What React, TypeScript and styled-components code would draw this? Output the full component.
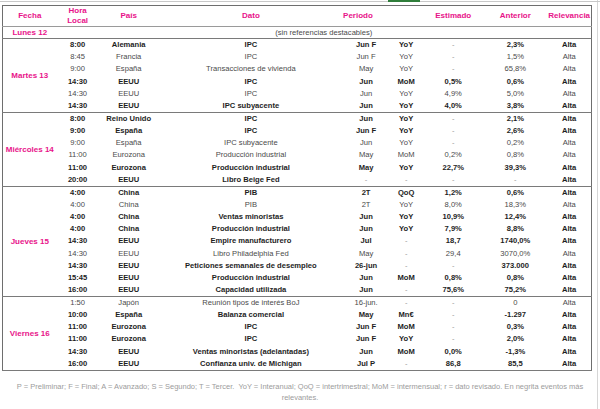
import React from "react";
import styled, { createGlobalStyle } from "styled-components";

const Global = createGlobalStyle`
  html, body { margin: 0; padding: 0; background: #fff; }
  body { font-family: "Liberation Sans", Arial, sans-serif; }
`;

const PINK = "#e8138a";

const Page = styled.div`
  width: 598px;
  height: 409px;
  border-right: 1px solid #d6d6d6;
  box-sizing: border-box;
  position: relative;
  padding: 5px 0 0 2px;
`;

const TopLine = styled.div`
  position: absolute;
  left: 0;
  top: 1px;
  width: 600px;
  height: 1px;
  background: #c8c8c8;
`;

const GreenTab = styled.div`
  position: absolute;
  left: 388px;
  top: 0;
  width: 32px;
  height: 2px;
  background: #2f7d3a;
`;

const Table = styled.table`
  border-collapse: collapse;
  table-layout: fixed;
  width: 590px;
  border: 1px solid #6e6e6e;
  font-size: 7.6px;
  color: #4a4a4a;
`;

const HeadRow = styled.tr`
  height: 20px;
  border-bottom: 1px solid #9a9a9a;
`;

const Th = styled.th<{ $align?: string }>`
  color: ${PINK};
  font-size: 8px;
  font-weight: bold;
  line-height: 10px;
  padding: 0;
  text-align: ${(p) => p.$align || "center"};
  vertical-align: middle;
`;

const GroupBody = styled.tbody`
  border-bottom: 1px solid #7a7a7a;
`;

const Row = styled.tr`
  height: 12.2px;
`;

const Td = styled.td<{ $bold?: boolean; $dim?: boolean }>`
  padding: 0;
  text-align: center;
  line-height: 12px;
  white-space: nowrap;
  font-weight: ${(p) => (p.$bold && !p.$dim ? "bold" : "normal")};
  color: ${(p) => (p.$dim ? "#9a9a9a" : p.$bold ? "#1e1e1e" : "#4a4a4a")};
`;

const DayCell = styled.td`
  padding: 0;
  text-align: center;
  vertical-align: middle;
  color: ${PINK};
  font-weight: bold;
  font-size: 8px;
  white-space: nowrap;
`;

const Note = styled.td`
  padding: 0;
  text-align: center;
  color: #4a4a4a;
`;

const Footer = styled.p`
  margin: 10px 0 0 0;
  width: 596px;
  text-align: center;
  font-size: 7.5px;
  line-height: 11px;
  color: #9c9c9c;
`;

type R = [boolean, string, string, string, string, string, string, string];

const groups: { day: string; rows: R[] }[] = [
  {
    day: "Martes 13",
    rows: [
      [true, "8:00", "Alemania", "IPC", "Jun F", "YoY", "-", "2,3%"],
      [false, "8:45", "Francia", "IPC", "Jun F", "YoY", "-", "1,5%"],
      [false, "9:00", "España", "Transacciones de vivienda", "May", "YoY", "-", "65,8%"],
      [true, "14:30", "EEUU", "IPC", "Jun", "MoM", "0,5%", "0,6%"],
      [false, "14:30", "EEUU", "IPC", "Jun", "YoY", "4,9%", "5,0%"],
      [true, "14:30", "EEUU", "IPC subyacente", "Jun", "YoY", "4,0%", "3,8%"],
    ],
  },
  {
    day: "Miércoles 14",
    rows: [
      [true, "8:00", "Reino Unido", "IPC", "Jun", "YoY", "-", "2,1%"],
      [true, "9:00", "España", "IPC", "Jun F", "YoY", "-", "2,6%"],
      [false, "9:00", "España", "IPC subyacente", "Jun", "YoY", "-", "0,2%"],
      [false, "11:00", "Eurozona", "Producción industrial", "May", "MoM", "0,2%", "0,8%"],
      [true, "11:00", "Eurozona", "Producción industrial", "May", "YoY", "22,7%", "39,3%"],
      [true, "20:00", "EEUU", "Libro Beige Fed", "-", "-", "-", "-"],
    ],
  },
  {
    day: "Jueves 15",
    rows: [
      [true, "4:00", "China", "PIB", "2T", "QoQ", "1,2%", "0,6%"],
      [false, "4:00", "China", "PIB", "2T", "YoY", "8,0%", "18,3%"],
      [true, "4:00", "China", "Ventas minoristas", "Jun", "YoY", "10,9%", "12,4%"],
      [true, "4:00", "China", "Producción industrial", "Jun", "YoY", "7,9%", "8,8%"],
      [true, "14:30", "EEUU", "Empire manufacturero", "Jul", "-", "18,7", "1740,0%"],
      [false, "14:30", "EEUU", "Libro Philadelphia Fed", "May", "-", "29,4", "3070,0%"],
      [true, "14:30", "EEUU", "Peticiones semanales de desempleo", "26-jun", "-", "-", "373.000"],
      [true, "15:45", "EEUU", "Producción industrial", "Jun", "MoM", "0,8%", "0,8%"],
      [true, "16:00", "EEUU", "Capacidad utilizada", "Jun", "-", "75,6%", "75,2%"],
    ],
  },
  {
    day: "Viernes 16",
    rows: [
      [false, "1:50", "Japón", "Reunión tipos de interés BoJ", "16-jun.", "-", "-", "0"],
      [true, "10:00", "España", "Balanza comercial", "May", "Mn€", "-", "-1.297"],
      [true, "11:00", "Eurozona", "IPC", "Jun F", "MoM", "-", "0,3%"],
      [true, "11:00", "Eurozona", "IPC", "Jun F", "YoY", "-", "2,0%"],
      [true, "14:30", "EEUU", "Ventas minoristas (adelantadas)", "Jun", "MoM", "0,0%", "-1,3%"],
      [true, "16:00", "EEUU", "Confianza univ. de Michigan", "Jul P", "-", "86,8", "85,5"],
    ],
  },
];

const widths = [54, 42, 60, 184, 46, 34, 60, 64, 44];

export default function App() {
  return (
    <>
      <Global />
      <Page>
        <TopLine />
        <GreenTab />
        <Table>
          <colgroup>
            {widths.map((w, i) => (
              <col key={i} style={{ width: w }} />
            ))}
          </colgroup>
          <thead>
            <HeadRow>
              <Th>Fecha</Th>
              <Th>
                Hora
                <br />
                Local
              </Th>
              <Th>País</Th>
              <Th>Dato</Th>
              <Th $align="left">Periodo</Th>
              <Th />
              <Th>Estimado</Th>
              <Th>Anterior</Th>
              <Th>Relevancia</Th>
            </HeadRow>
          </thead>
          <GroupBody>
            <Row>
              <DayCell>Lunes 12</DayCell>
              <Note colSpan={8}>(sin referencias destacables)</Note>
            </Row>
          </GroupBody>
          {groups.map((g) => (
            <GroupBody key={g.day}>
              {g.rows.map((r, i) => {
                const [b, hora, pais, dato, per, uni, est, ant] = r;
                return (
                  <Row key={i}>
                    {i === 0 && <DayCell rowSpan={g.rows.length}>{g.day}</DayCell>}
                    <Td $bold={b}>{hora}</Td>
                    <Td $bold={b}>{pais}</Td>
                    <Td $bold={b}>{dato}</Td>
                    <Td $bold={b} $dim={per === "-"}>{per}</Td>
                    <Td $bold={b} $dim={uni === "-"}>{uni}</Td>
                    <Td $bold={b} $dim={est === "-"}>{est}</Td>
                    <Td $bold={b} $dim={ant === "-"}>{ant}</Td>
                    <Td $bold={b}>Alta</Td>
                  </Row>
                );
              })}
            </GroupBody>
          ))}
        </Table>
        <Footer>
          P = Preliminar; F = Final; A = Avanzado; S = Segundo; T = Tercer.&nbsp; YoY = Interanual; QoQ =
          intertrimestral; MoM = intermensual; r = dato revisado. En negrita eventos más relevantes.
        </Footer>
      </Page>
    </>
  );
}
